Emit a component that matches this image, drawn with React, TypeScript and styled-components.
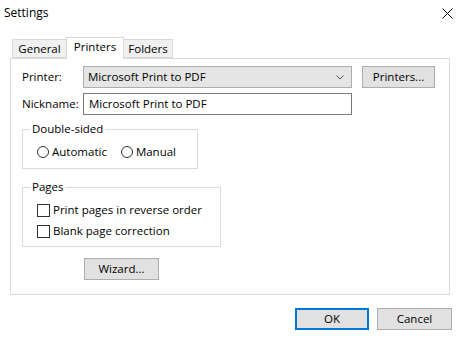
import React from "react";
import styled, { createGlobalStyle } from "styled-components";

const Global = createGlobalStyle`
  html, body { margin: 0; padding: 0; background: #ffffff; }
  body { width: 463px; height: 344px; overflow: hidden; }
  * { box-sizing: border-box; }
`;

const FONT = `"Open Sans", "Noto Sans", "Liberation Sans", sans-serif`;

const Window = styled.div`
  width: 463px;
  height: 344px;
  background: #ffffff;
  font-family: ${FONT};
  font-size: 11.5px;
  color: #000000;
  display: flex;
  flex-direction: column;
`;

const TitleBar = styled.div`
  height: 26px;
  display: flex;
  align-items: center;
  justify-content: space-between;
  padding: 0 10px 0 4px;
  font-size: 12px;
  line-height: 16px;
`;

const Close = styled.div`
  width: 12px;
  height: 12px;
  display: flex;
  align-items: center;
  justify-content: center;
`;

const Body = styled.div`
  padding: 11px 13px 0 10px;
  display: flex;
  flex-direction: column;
`;

const TabStrip = styled.div`
  display: flex;
  align-items: flex-end;
  height: 21px;
  padding-left: 2px;
  position: relative;
  z-index: 1;
`;

const Tab = styled.div<{ $active?: boolean; $w: number }>`
  width: ${(p) => p.$w}px;
  height: ${(p) => (p.$active ? 22 : 19)}px;
  margin-left: -1px;
  margin-bottom: ${(p) => (p.$active ? -1 : 0)}px;
  border: 1px solid #d9d9d9;
  border-bottom: ${(p) => (p.$active ? "none" : "1px solid #d9d9d9")};
  background: ${(p) => (p.$active ? "#ffffff" : "#f0f0f0")};
  display: flex;
  align-items: ${(p) => (p.$active ? "flex-start" : "center")};
  padding-top: ${(p) => (p.$active ? 1 : 0)}px;
  justify-content: center;
  line-height: 16px;
  position: relative;
  z-index: ${(p) => (p.$active ? 2 : 1)};
  &:first-child { margin-left: 0; }
`;

const Panel = styled.div`
  width: 440px;
  height: 237px;
  border: 1px solid #d9d9d9;
  padding: 7px 11px 0 11px;
  display: flex;
  flex-direction: column;
`;

const FieldRow = styled.div<{ $mt?: number }>`
  display: flex;
  align-items: center;
  gap: 0;
  height: 22px;
  margin-top: ${(p) => p.$mt ?? 0}px;
`;

const Label = styled.div`
  width: 61px;
  line-height: 16px;
`;

const Combo = styled.div`
  width: 269px;
  height: 22px;
  margin-right: 10px;
  background: #e5e5e5;
  border: 1px solid #adadad;
  display: flex;
  align-items: center;
  justify-content: space-between;
  padding: 0 7px 0 4px;
  line-height: 16px;
`;

const TextBox = styled.div`
  width: 269px;
  height: 22px;
  background: #ffffff;
  border: 1px solid #7a7a7a;
  display: flex;
  align-items: center;
  padding: 0 5px;
  line-height: 16px;
`;

const Button = styled.div<{ $w: number; $default?: boolean }>`
  width: ${(p) => p.$w}px;
  height: 22px;
  background: #e1e1e1;
  border: ${(p) => (p.$default ? "2px solid #0078d7" : "1px solid #adadad")};
  display: flex;
  align-items: center;
  justify-content: center;
  line-height: 16px;
`;

const Group = styled.fieldset<{ $w: number; $mt: number }>`
  width: ${(p) => p.$w}px;
  margin: ${(p) => p.$mt}px 0 0 0;
  padding: 0 0 7px 14px;
  border: 1px solid #dcdcdc;
  min-width: 0;
`;

const Legend = styled.legend`
  margin-left: -7px;
  padding: 0 2px;
  line-height: 16px;
`;

const Options = styled.div<{ $dir: "row" | "column" }>`
  display: flex;
  flex-direction: ${(p) => p.$dir};
  gap: ${(p) => (p.$dir === "row" ? "14px" : "5px")};
  margin-top: 7px;
  padding-bottom: ${(p) => (p.$dir === "row" ? 1 : 0)}px;
`;

const Option = styled.label`
  display: flex;
  align-items: center;
  gap: 3px;
  line-height: 16px;
`;

const Radio = styled.span`
  width: 12px;
  height: 12px;
  border: 1px solid #333333;
  border-radius: 50%;
  background: #ffffff;
`;

const Check = styled.span`
  width: 13px;
  height: 13px;
  border: 1px solid #333333;
  background: #ffffff;
`;

const WizardRow = styled.div`
  display: flex;
  margin-top: 11px;
  padding-left: 62px;
`;

const Footer = styled.div`
  display: flex;
  justify-content: flex-end;
  gap: 8px;
  margin-top: 13px;
  padding-right: 11px;
`;

export default function App() {
  return (
    <Window>
      <Global />
      <TitleBar>
        <span>Settings</span>
        <Close>
          <svg width="11" height="11" viewBox="0 0 11 11">
            <path d="M0.5 0.5 L10.5 10.5 M10.5 0.5 L0.5 10.5" stroke="#000" strokeWidth="1" />
          </svg>
        </Close>
      </TitleBar>
      <Body>
        <TabStrip>
          <Tab $w={55}>General</Tab>
          <Tab $w={58} $active>
            Printers
          </Tab>
          <Tab $w={50}>Folders</Tab>
        </TabStrip>
        <Panel>
          <FieldRow>
            <Label>Printer:</Label>
            <Combo>
              <span>Microsoft Print to PDF</span>
              <svg width="8" height="5" viewBox="0 0 8 5">
                <path d="M0.5 0.5 L4 4 L7.5 0.5" stroke="#555" strokeWidth="1" fill="none" />
              </svg>
            </Combo>
            <Button $w={73}>Printers...</Button>
          </FieldRow>
          <FieldRow $mt={5}>
            <Label>Nickname:</Label>
            <TextBox>Microsoft Print to PDF</TextBox>
          </FieldRow>
          <Group $w={176} $mt={6}>
            <Legend>Double-sided</Legend>
            <Options $dir="row">
              <Option>
                <Radio />
                Automatic
              </Option>
              <Option>
                <Radio />
                Manual
              </Option>
            </Options>
          </Group>
          <Group $w={199} $mt={10}>
            <Legend>Pages</Legend>
            <Options $dir="column">
              <Option>
                <Check />
                Print pages in reverse order
              </Option>
              <Option>
                <Check />
                Blank page correction
              </Option>
            </Options>
          </Group>
          <WizardRow>
            <Button $w={75}>Wizard...</Button>
          </WizardRow>
        </Panel>
      </Body>
      <Footer>
        <Button $w={74} $default>
          OK
        </Button>
        <Button $w={75}>Cancel</Button>
      </Footer>
    </Window>
  );
}
